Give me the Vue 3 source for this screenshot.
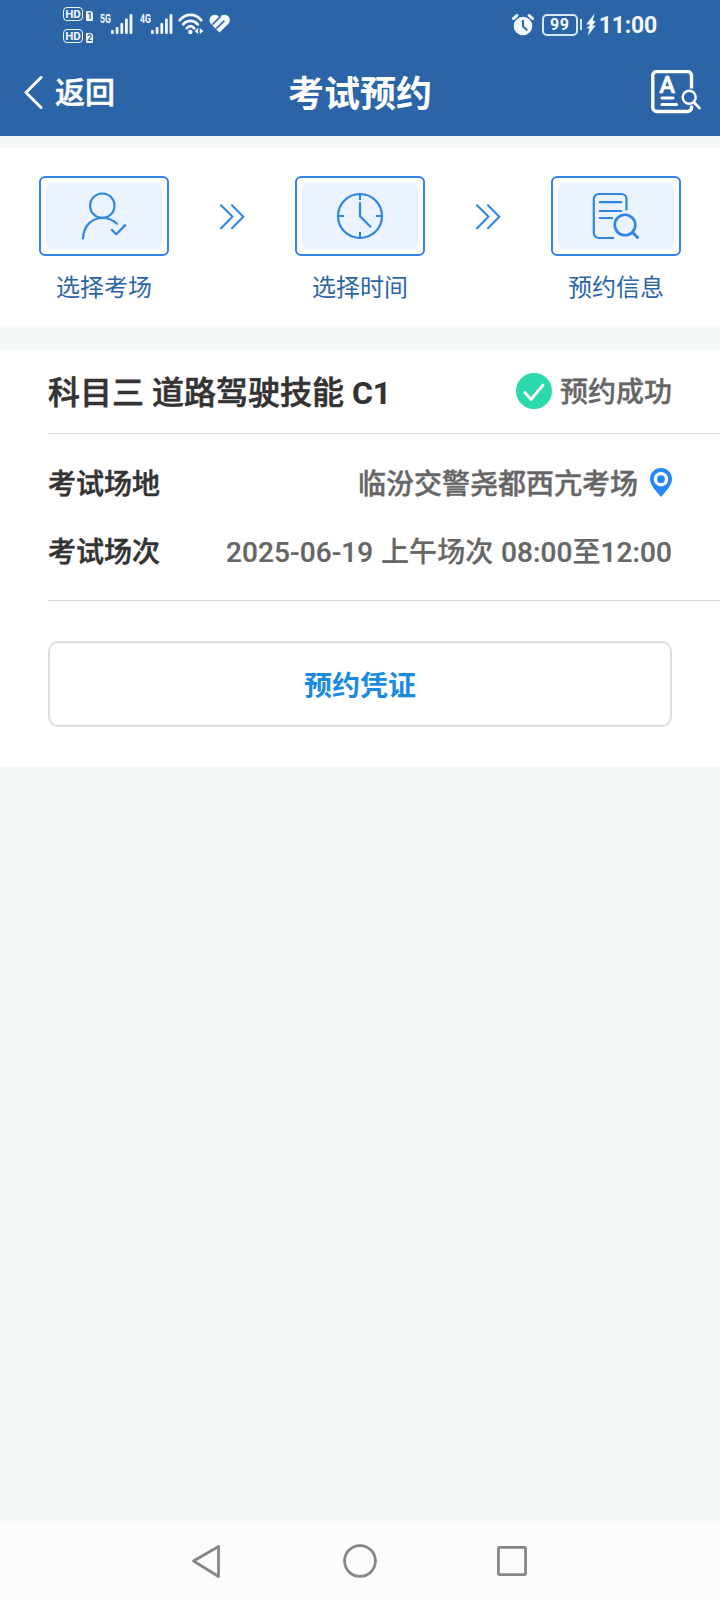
<template>
  <div class="page">
    <header class="top">
      <div class="status">
        <div class="hd-list">
          <div v-for="n in 2" :key="n" class="hd-row">
            <span class="hd">HD</span>
            <span class="sim">{{ n }}</span>
          </div>
        </div>
        <div v-for="net in networks" :key="net" class="signal">
          <svg width="33" height="28" viewBox="0 -6 33 28" fill="#f2f8ff">
            <text x="0" y="10" textLength="11" lengthAdjust="spacingAndGlyphs">{{ net }}</text>
            <rect x="11" y="17" width="2.8" height="4" rx="1" />
            <rect x="15.7" y="14" width="2.8" height="7" rx="1" />
            <rect x="20.4" y="10" width="2.8" height="11" rx="1" />
            <rect x="25" y="5.5" width="2.8" height="15.5" rx="1" />
            <rect x="29.6" y="1" width="2.8" height="20" rx="1" />
          </svg>
        </div>
        <svg class="wifi" width="26" height="22" viewBox="0 0 26 22" fill="none" stroke="#f2f8ff" stroke-width="2.8" stroke-linecap="round">
          <path d="M1.8 7.2C7.5 0.2 17.5 0.2 23.2 7.2" />
          <path d="M5.2 11.4C9 6.6 16 6.6 19.8 11.4" />
          <path d="M8.8 15.2C10.8 12.4 14.2 12.4 16.2 15.2" />
          <circle cx="12.3" cy="19" r="2.2" fill="#f2f8ff" stroke="none" />
          <path d="M20.2 15v6l-3.6-3zM21.8 15v6l3.6-3z" fill="#f2f8ff" stroke="none" />
        </svg>
        <svg class="health" width="22" height="20" viewBox="0 0 22 20">
          <path d="M10.5 18.6L2 10C-0.2 7.7 0 4 2.4 2 5 0 8 0.8 10.5 3.2 13 0.8 16.5 0 19 2c2.4 2.2 2.3 5.700 0.200 8z" fill="#f2f8ff" />
          <path d="M3.2 10.8L11.6 2.4M7.2 14.8L15.4 6.6" stroke="#2c65a7" stroke-width="1.6" />
        </svg>
        <div class="status-right">
          <svg width="22" height="22" viewBox="0 0 22 22" fill="none">
            <circle cx="11" cy="12" r="9.3" fill="#f2f8ff" />
            <path d="M1.4 4.6L5 1.4M20.6 4.6L17 1.4" stroke="#f2f8ff" stroke-width="2.8" stroke-linecap="round" />
            <path d="M11 6.8v5.6l3.6 3.4" stroke="#2c65a7" stroke-width="2" stroke-linecap="round" />
          </svg>
          <span class="battery">99</span>
          <span class="battery-cap"></span>
          <svg class="bolt" width="10" height="24" viewBox="0 0 10 24" fill="#f2f8ff">
            <path d="M8.6 0.5L0.4 11.2l4 0.6-3.8 3.4 3 0.4-2 7.2L9.6 12.8l-3.4-0.6L9.8 8.4 6.8 7.8z" />
          </svg>
          <span class="clock">11:00</span>
        </div>
      </div>
      <div class="bar">
        <div class="back">
          <svg width="20" height="34" viewBox="0 0 20 34" fill="none" stroke="#fff" stroke-width="3" stroke-linecap="round" stroke-linejoin="round">
            <path d="M18 1.5L3 16.5l15 15" />
          </svg>
          <span>返回</span>
        </div>
        <h1>考试预约</h1>
        <svg class="search" width="52" height="44" viewBox="0 0 52 44" fill="none" stroke="#fff" stroke-linecap="round">
          <path d="M40.5 18.5V5.5a4 4 0 0 0-4-4H5.8a4 4 0 0 0-4 4v32a4 4 0 0 0 4 4h30.700a4 4 0 0 0 4-4v-2" stroke-width="3.4" stroke-linecap="butt" />
          <text x="16.3" y="23" text-anchor="middle" fill="#fff" stroke-width="0.6" stroke-linejoin="round">A</text>
          <path d="M11 28h11M11 34.5h14.5" stroke-width="3.2" />
          <circle cx="38.2" cy="27.3" r="6.5" fill="#2c65a7" stroke-width="2.4" />
          <path d="M43.1 32.5l5.4 5.6" stroke-width="2.8" />
        </svg>
      </div>
    </header>

    <section class="steps">
      <template v-for="(step, index) in steps" :key="step.icon">
        <svg v-if="index > 0" class="arrow" width="26" height="26" viewBox="0 0 26 26" fill="none" stroke="#2f85e2" stroke-width="2" stroke-linecap="round" stroke-linejoin="round">
          <path d="M2 1.2L13.5 12.700 2 24.2M13 1.2L24.3 12.7 13 24.2" />
        </svg>
        <div class="step">
          <div class="step-box">
            <div class="step-inner">
              <svg width="50" height="50" viewBox="0 0 50 50" fill="none" stroke="#2f85e2" stroke-width="2.2">
                <template v-if="step.icon === 'user'">
                  <circle cx="23.3" cy="14.7" r="12.2" />
                  <path d="M4 47.5C4.6 34.5 13 27 23.3 27c5.8 0 10.6 2 14.7 5.7" stroke-linecap="round" />
                  <path d="M32.2 38.2l5 5 9.6-9.6" />
                </template>
                <template v-else-if="step.icon === 'time'">
                  <circle cx="25" cy="25" r="22" />
                  <path d="M25 3v6M25 41v6M3 25h6M41 25h6" />
                  <path d="M25 11.2V25.2l11 11" />
                </template>
                <template v-else>
                  <path d="M35.5 19.5V8a5 5 0 0 0-5-5H7.8a5 5 0 0 0-5 5v34a5 5 0 0 0 5 5H23" />
                  <path d="M8 11.2h23M8 20h23M8 27h14" />
                  <circle cx="34" cy="34" r="10.3" stroke-width="2.6" />
                  <path d="M41.5 41.5l5 5" stroke-width="3" stroke-linecap="round" />
                </template>
              </svg>
            </div>
          </div>
          <span>{{ step.name }}</span>
        </div>
      </template>
    </section>

    <section class="card">
      <div class="card-head">
        <h2>科目三 道路驾驶技能 <b>C1</b></h2>
        <div class="result">
          <svg width="36" height="36" viewBox="0 0 36 36" fill="none">
            <circle cx="18" cy="18" r="18" fill="#2bd9ab" />
            <path d="M8.8 19.5l6.2 7L27 12" stroke="#fff" stroke-width="2.8" stroke-linecap="round" stroke-linejoin="round" />
          </svg>
          <span>预约成功</span>
        </div>
      </div>
      <div class="rows">
        <div class="row">
          <label>考试场地</label>
          <span>临汾交警尧都西亢考场</span>
          <svg width="22" height="29" viewBox="0 0 22 29">
            <path d="M11 0C4.9 0 0 4.9 0 11c0 6.5 6.5 12.5 11 18 4.5-5.5 11-11.5 11-18C22 4.9 17.1 0 11 0z" fill="#2589f5" />
            <circle cx="11" cy="11.2" r="5.6" fill="#2589f5" stroke="#fff" stroke-width="3.4" />
          </svg>
        </div>
        <div class="row">
          <label>考试场次</label>
          <span class="time">2025-06-19 上午场次 08:00至12:00</span>
        </div>
      </div>
      <button class="voucher">预约凭证</button>
    </section>

    <nav class="nav">
      <svg width="30" height="36" viewBox="0 0 30 36">
        <path d="M2.5 18L27.500 3.500v30z" />
      </svg>
      <svg width="34" height="34" viewBox="0 0 34 34">
        <circle cx="17" cy="17" r="15.4" />
      </svg>
      <svg width="32" height="32" viewBox="0 0 32 32">
        <rect x="2.4" y="2.4" width="27.2" height="27.2" rx="1" />
      </svg>
    </nav>
  </div>
</template>

<script setup>
import { ref } from 'vue'

const networks = ref(['5G', '4G'])

const steps = ref([
  { icon: 'user', name: '选择考场' },
  { icon: 'time', name: '选择时间' },
  { icon: 'info', name: '预约信息' }
])
</script>

<style>
body {
  margin: 0;
  background: #f5f9fa;
}
</style>

<style scoped>
.page {
  display: flex;
  flex-direction: column;
  width: 720px;
  height: 1600px;
  background: #f5f9fa;
  font-family: Roboto, "Noto Sans CJK SC", sans-serif;
  color: #333;
}
svg {
  display: block;
  flex: none;
}
.top {
  height: 136px;
  background: #2c65a7;
  color: #fff;
}
.status {
  display: flex;
  height: 50px;
  box-sizing: border-box;
  padding: 7px 63px 0 63px;
  color: #f2f8ff;
}
.hd-list {
  display: flex;
  flex-direction: column;
  gap: 8px;
  width: 37px;
}
.hd-row {
  display: flex;
  align-items: flex-end;
  gap: 3px;
  height: 14px;
}
.hd {
  width: 20px;
  height: 14px;
  box-sizing: border-box;
  border: 1.5px solid #f2f8ff;
  border-radius: 4px;
  font-size: 11.5px;
  font-weight: 700;
  line-height: 12px;
  text-align: center;
}
.sim {
  width: 7px;
  height: 10px;
  background: #f2f8ff;
  border-radius: 1px 3px 1px 1px;
  color: #2c65a7;
  font-size: 9px;
  font-weight: 700;
  line-height: 10px;
  text-align: center;
}
.signal {
  width: 40px;
}
.signal text {
  font-size: 13.5px;
  font-weight: 700;
}
.wifi {
  margin: 6px 0 0 -2px;
}
.health {
  margin: 7px 0 0 5px;
}
.status-right {
  display: flex;
  align-items: center;
  height: 35px;
  margin-left: auto;
}
.battery {
  width: 36px;
  height: 22px;
  box-sizing: border-box;
  margin-left: 8px;
  border: 2px solid #d5e6f8;
  border-radius: 5px;
  font-size: 16px;
  font-weight: 700;
  line-height: 18px;
  letter-spacing: 0.5px;
  text-align: center;
}
.battery-cap {
  width: 2px;
  height: 11px;
  margin-left: 2px;
  background: #d5e6f8;
}
.bolt {
  margin-left: 4px;
}
.clock {
  margin-left: 3px;
  font-size: 23px;
  font-weight: 700;
  line-height: 24px;
  padding-top: 2px;
  letter-spacing: -0.2px;
}
.bar {
  display: grid;
  grid-template-columns: 1fr auto 1fr;
  align-items: center;
  height: 86px;
  padding: 0 18px 0 23px;
}
.back {
  display: flex;
  align-items: center;
  gap: 12px;
  font-size: 30px;
  font-weight: 500;
  line-height: 40px;
  -webkit-text-stroke: 0.5px currentColor;
}
h1 {
  margin: 0;
  padding: 3px 5px 0 0;
  font-size: 36px;
  font-weight: 700;
  line-height: 50px;
}
.search {
  justify-self: end;
  margin: 0 -1px 2px 0;
}
.search text {
  font-size: 24px;
  font-weight: 500;
}
.steps {
  display: flex;
  justify-content: space-between;
  height: 178px;
  box-sizing: border-box;
  margin-top: 12px;
  padding: 28px 39px 0;
  background: #fff;
}
.arrow {
  margin-top: 28px;
}
.step {
  width: 130px;
  color: #2c65a7;
  font-size: 24px;
  line-height: 36px;
  text-align: center;
}
.step-box {
  height: 80px;
  box-sizing: border-box;
  margin-bottom: 14px;
  padding: 5px;
  border: 2px solid #2f85e2;
  border-radius: 6px;
}
.step-inner {
  display: flex;
  align-items: center;
  justify-content: center;
  height: 66px;
  background: #eaf3ff;
  border-radius: 6px;
}
.card {
  height: 417px;
  margin-top: 24px;
  background: #fff;
}
.card-head {
  display: flex;
  align-items: center;
  justify-content: space-between;
  height: 83px;
  margin-left: 48px;
  padding-right: 48px;
  border-bottom: 1px solid #d8d8d8;
}
h2 {
  margin: 0;
  padding-top: 2px;
  font-size: 32px;
  font-weight: 500;
  line-height: 44px;
  -webkit-text-stroke: 0.6px currentColor;
}
h2 b {
  -webkit-text-stroke: 0.2px currentColor;
}
.result {
  display: flex;
  align-items: center;
  gap: 8px;
  color: #666;
  font-size: 28px;
  font-weight: 500;
  line-height: 40px;
  -webkit-text-stroke: 0.4px currentColor;
}
.result svg {
  margin-bottom: 2px;
}
.result span {
  padding-top: 2px;
}
.rows {
  height: 167px;
  box-sizing: border-box;
  margin-left: 48px;
  padding: 14px 48px 0 0;
  border-bottom: 1px solid #d8d8d8;
}
.row {
  display: flex;
  align-items: center;
  height: 68px;
  font-size: 28px;
  font-weight: 500;
}
.row label {
  -webkit-text-stroke: 0.5px currentColor;
}
.row span {
  margin-left: auto;
  color: #666;
  -webkit-text-stroke: 0.4px currentColor;
}
.row .time {
  letter-spacing: 0.08px;
  word-spacing: 0.7px;
  -webkit-text-stroke: 0.2px currentColor;
}
.row svg {
  margin-left: 12px;
}
.voucher {
  display: block;
  width: 624px;
  height: 86px;
  margin: 40px auto 0;
  border: 2px solid #ddd;
  border-radius: 10px;
  background: #fff;
  color: #1a8be3;
  font-family: inherit;
  font-size: 28px;
  font-weight: 700;
}
.nav {
  display: flex;
  align-items: center;
  justify-content: space-between;
  height: 78px;
  box-sizing: border-box;
  margin-top: auto;
  padding: 0 192px 0 191px;
  background: #fcfcfc;
}
.nav svg {
  fill: none;
  stroke: #878787;
  stroke-width: 2.8;
  stroke-linejoin: round;
}
.nav svg:nth-child(2) {
  margin-left: 2px;
}
</style>
